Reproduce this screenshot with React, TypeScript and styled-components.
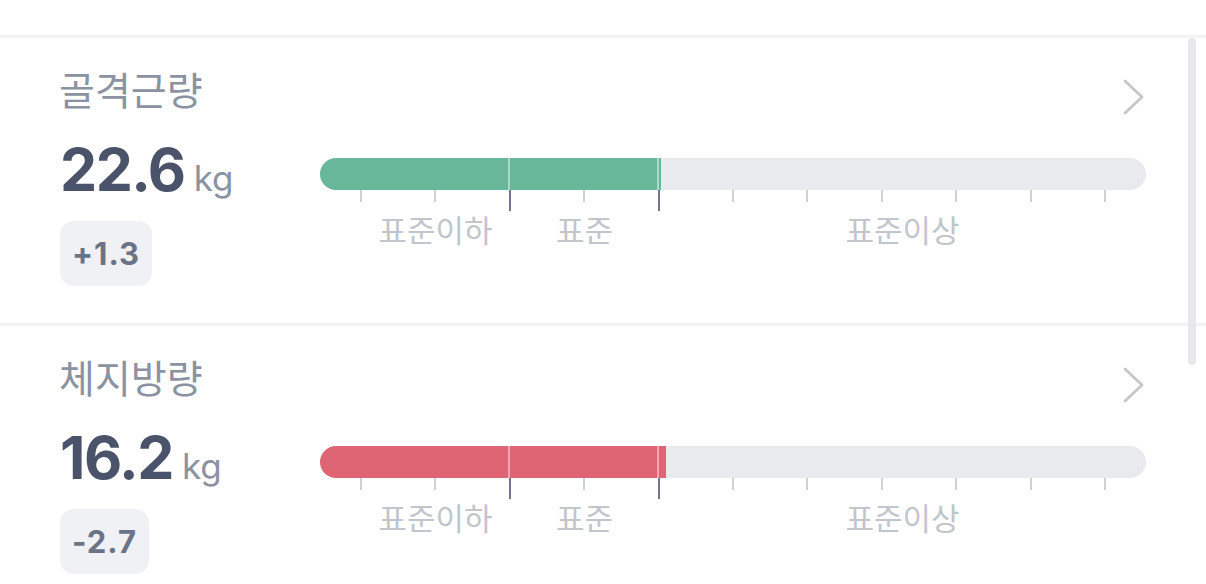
import React from 'react';
import styled, { createGlobalStyle } from 'styled-components';

const GlobalStyle = createGlobalStyle`
  html, body {
    margin: 0;
    padding: 0;
    background: #ffffff;
  }
  body {
    font-family: Inter, "Noto Sans CJK KR", sans-serif;
    -webkit-font-smoothing: antialiased;
  }
`;

type Metric = {
  title: string;
  value: string;
  unit: string;
  diff: string;
  fill: number;
  color: string;
};

const metrics: Metric[] = [
  { title: '골격근량', value: '22.6', unit: 'kg', diff: '+1.3', fill: 341, color: '#68b79a' },
  { title: '체지방량', value: '16.2', unit: 'kg', diff: '-2.7', fill: 346, color: '#e06574' },
];

const BAR_WIDTH = 826;
const TICKS = 11;
const DARK_TICKS = [2, 4];

export default function App() {
  return (
    <Page>
      <GlobalStyle />
      <List>
        {metrics.map(m => (
          <MetricRow key={m.title} metric={m} />
        ))}
      </List>
      <ScrollThumb />
    </Page>
  );
}

function MetricRow({ metric }: { metric: Metric }) {
  return (
    <Section>
      <Info>
        <Title>{metric.title}</Title>
        <Value>
          <Number>{metric.value}</Number>
          <Unit>{metric.unit}</Unit>
        </Value>
        <Badge>{metric.diff}</Badge>
      </Info>
      <Gauge>
        <Header>
          <Chevron />
        </Header>
        <Track>
          <Fill $color={metric.color} style={{ width: `${(metric.fill / BAR_WIDTH) * 100}%` }} />
          <Split style={{ left: 188 }} />
          <Split style={{ left: 337 }} />
        </Track>
        <Ticks>
          {Array.from({ length: TICKS }).map((_, i) => (
            <Tick key={i} $dark={DARK_TICKS.includes(i)} />
          ))}
        </Ticks>
        <Labels>
          <Label>표준이하</Label>
          <Label>표준</Label>
          <Label>표준이상</Label>
        </Labels>
      </Gauge>
    </Section>
  );
}

function Chevron() {
  return (
    <svg width="24" height="36" viewBox="0 0 24 36" fill="none">
      <path d="M3 2 L20 18 L3 34" stroke="#c6c6cb" strokeWidth="2.8" strokeLinecap="round" strokeLinejoin="round" />
    </svg>
  );
}

const Page = styled.div`
  position: relative;
  width: 1206px;
  height: 584px;
  overflow: hidden;
  padding-top: 35px;
  box-sizing: border-box;
`;

const List = styled.div`
  display: flex;
  flex-direction: column;
`;

const Section = styled.div`
  display: flex;
  height: 288px;
  box-sizing: border-box;
  border-top: 3px solid #f3f3f5;
  padding: 0 60px;
`;

const Info = styled.div`
  width: 260px;
  display: flex;
  flex-direction: column;
  align-items: flex-start;
  padding-top: 29px;
`;

const Title = styled.div`
  font-family: "Noto Sans CJK KR", sans-serif;
  font-size: 39px;
  line-height: 42px;
  color: #8b93a3;
  margin-left: -1px;
`;

const Value = styled.div`
  margin-top: 31px;
  display: flex;
  align-items: baseline;
  height: 60px;
  line-height: 60px;
`;

const Number = styled.span`
  font-family: Inter, sans-serif;
  font-weight: 700;
  font-size: 59px;
  color: #4a5369;
  letter-spacing: -1.5px;
`;

const Unit = styled.span`
  font-family: Inter, sans-serif;
  font-size: 35px;
  color: #8b93a3;
  margin-left: 9px;
`;

const Badge = styled.div`
  margin-top: 21px;
  height: 65px;
  padding: 0 12px;
  display: flex;
  align-items: center;
  border-radius: 14px;
  background: #f0f1f4;
  font-family: Inter, sans-serif;
  font-weight: 700;
  font-size: 31px;
  letter-spacing: 1px;
  color: #6b7386;
`;

const Gauge = styled.div`
  width: ${BAR_WIDTH}px;
  display: flex;
  flex-direction: column;
`;

const Header = styled.div`
  display: flex;
  justify-content: flex-end;
  padding-top: 41px;
  height: 36px;
  margin-bottom: 43px;
`;

const Track = styled.div`
  position: relative;
  height: 32px;
  border-radius: 16px;
  background: #e9eaee;
  overflow: hidden;
`;

const Fill = styled.div<{ $color: string }>`
  height: 100%;
  background: ${({ $color }) => $color};
`;

const Split = styled.div`
  position: absolute;
  top: 0;
  bottom: 0;
  width: 2px;
  background: rgba(255, 255, 255, 0.45);
`;

const Ticks = styled.div`
  display: flex;
  justify-content: space-between;
  align-items: flex-start;
  padding: 0 40px 0 40px;
  height: 21px;
`;

const Tick = styled.div<{ $dark: boolean }>`
  width: 2px;
  height: ${({ $dark }) => ($dark ? 21 : 12)}px;
  background: ${({ $dark }) => ($dark ? '#6f7789' : '#ced1d7')};
`;

const Labels = styled.div`
  display: grid;
  grid-template-columns: 149px 149px 1fr;
  padding-left: 41px;
  margin-top: 1px;
`;

const Label = styled.div`
  font-family: "Noto Sans CJK KR", sans-serif;
  font-size: 31px;
  line-height: 34px;
  color: #c1c5cc;
  text-align: center;
`;

const ScrollThumb = styled.div`
  position: absolute;
  left: 1188px;
  top: 38px;
  width: 8px;
  height: 327px;
  border-radius: 4px;
  background: #e8e8ea;
`;
